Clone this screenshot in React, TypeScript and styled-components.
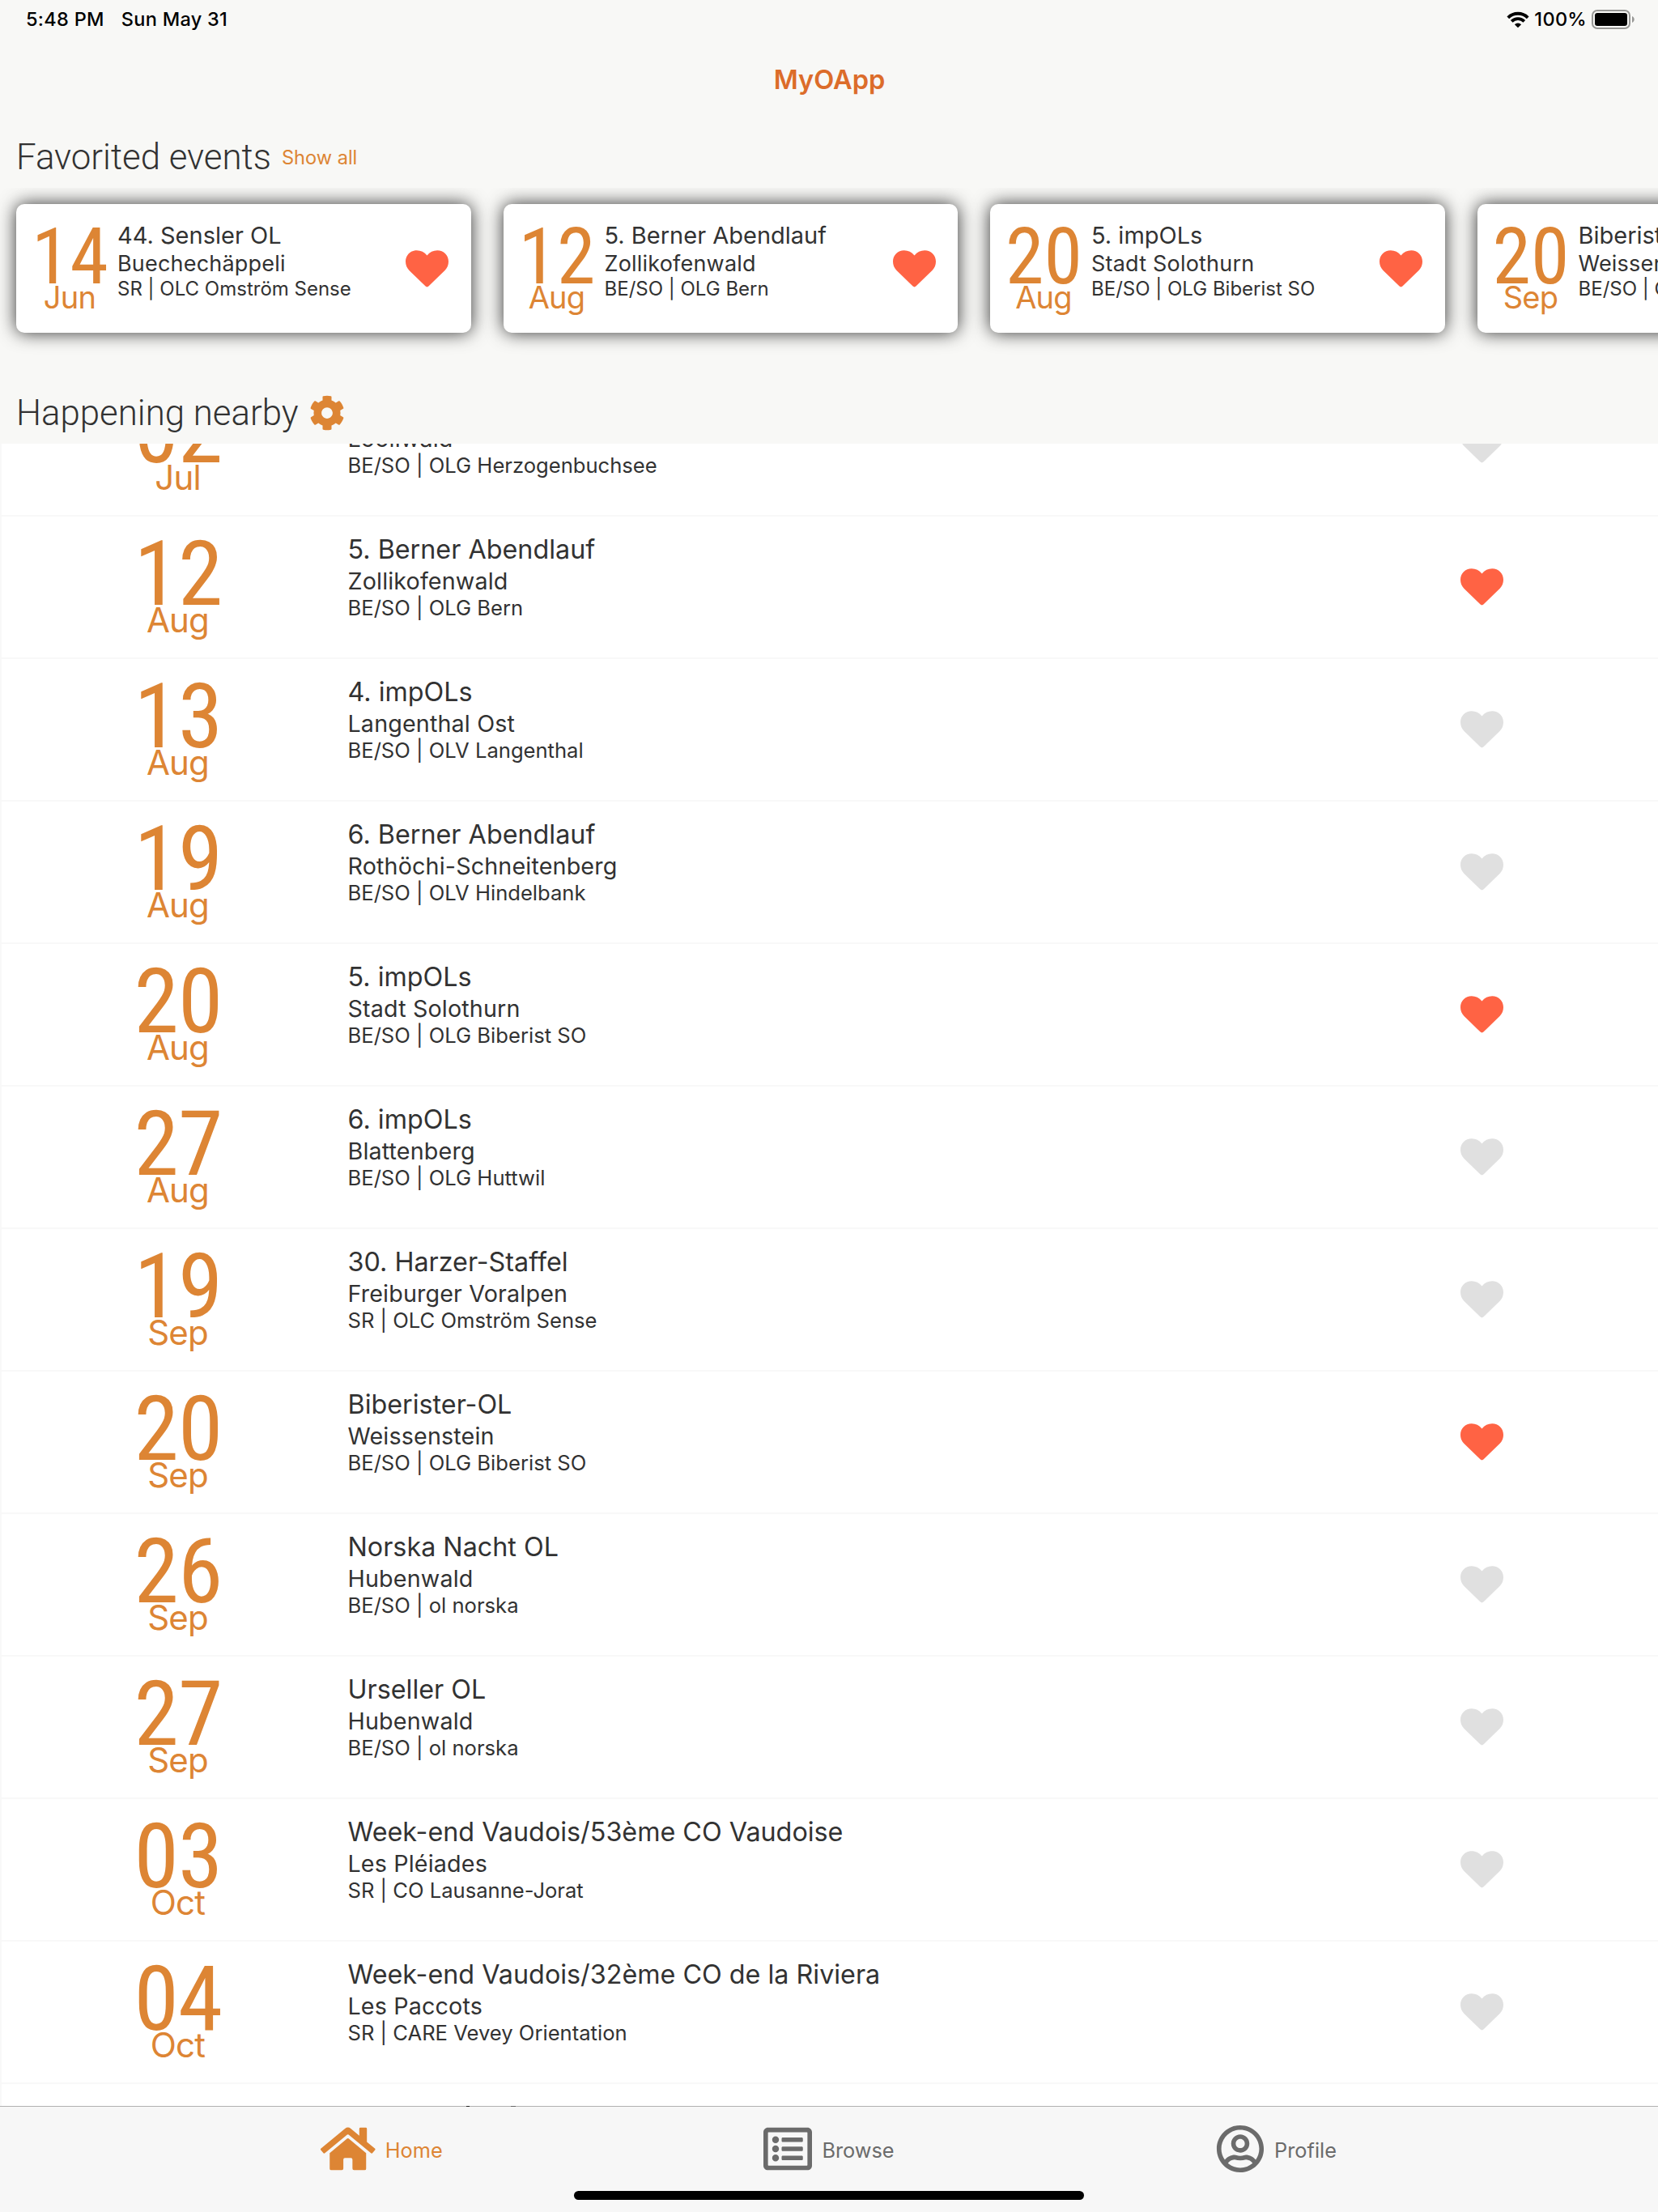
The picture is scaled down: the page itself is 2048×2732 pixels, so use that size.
import React from 'react';
import styled, { createGlobalStyle, css } from 'styled-components';
import { FaCog, FaHome, FaRegListAlt, FaRegUserCircle } from 'react-icons/fa';

const colors = {
  background: '#f8f8f6',
  accent: '#dd8534',
  title: '#dc6c2a',
  text: '#323232',
  heart: '#ff6344',
  heartOff: '#e0e0e0',
  tab: '#6b6b6b',
};

const GlobalStyle = createGlobalStyle`
  *, *::before, *::after { box-sizing: border-box; }
  html, body { margin: 0; padding: 0; }
  body { background: ${colors.background}; overflow: hidden; }
`;

const Screen = styled.div`
  display: flex;
  flex-direction: column;
  width: 2048px;
  height: 2732px;
  overflow: hidden;
  background: ${colors.background};
  color: ${colors.text};
  font-family: Inter, 'Liberation Sans', sans-serif;
  white-space: nowrap;
`;

const StatusBar = styled.div`
  flex: none;
  display: flex;
  align-items: center;
  justify-content: space-between;
  height: 48px;
  padding: 0 28px 0 32px;
  color: #000;
  font-size: 23.5px;
  font-weight: 500;
  letter-spacing: 0.3px;
`;

const StatusGroup = styled.div<{ $gap: number }>`
  display: flex;
  align-items: center;
  gap: ${(p) => p.$gap}px;
`;

const StatusText = styled.span`
  padding-bottom: 1.5px;
`;

const NavBar = styled.header`
  flex: none;
  display: flex;
  align-items: center;
  justify-content: center;
  height: 120px;
  padding: 0 0 20px 1px;
  color: ${colors.title};
  font-size: 32.6px;
  font-weight: 600;
`;

const SectionHeader = styled.div`
  flex: none;
  display: flex;
  align-items: center;
  gap: 13px;
  height: 52px;
  margin-bottom: 12px;
  padding-left: 20px;
`;

const SectionTitle = styled.h2`
  margin: 0;
  font-family: Roboto, 'Liberation Sans', sans-serif;
  font-size: 43.8px;
  font-weight: 300;
  line-height: 52px;
`;

const ShowAll = styled.a`
  color: ${colors.accent};
  font-size: 23.6px;
`;

const SettingsIcon = styled(FaCog)`
  width: 44px;
  height: 44px;
  color: ${colors.accent};
`;

const CardStrip = styled.div`
  flex: none;
  display: flex;
  gap: 40px;
  height: 252px;
  padding: 20px 20px 0;
  overflow: hidden;
`;

const Card = styled.article`
  flex: none;
  display: flex;
  width: 561.5px;
  height: 159px;
  padding: 0 27.5px 0 18px;
  border-radius: 10px;
  background: #fff;
  box-shadow: 0 0 22px rgba(0, 0, 0, 0.8);
`;

type Size = { $compact?: boolean };

const DateColumn = styled.div<Size>`
  flex: none;
  display: flex;
  flex-direction: column;
  align-items: center;
  color: ${colors.accent};
  ${(p) =>
    p.$compact
      ? css`
          width: 96px;
          margin-right: 11px;
          padding-top: 25px;
        `
      : css`
          width: 417px;
          margin-right: 1.5px;
          padding-top: 25.7px;
        `}
`;

const Day = styled.span<Size>`
  padding-left: 1px;
  font-family: 'Roboto Condensed', Roboto, sans-serif;
  font-size: ${(p) => (p.$compact ? 96 : 112)}px;
  line-height: ${(p) => (p.$compact ? 80 : 90)}px;
  letter-spacing: ${(p) => (p.$compact ? 0 : -0.8)}px;
`;

const Month = styled.span<Size>`
  font-size: ${(p) => (p.$compact ? 38 : 42)}px;
  line-height: ${(p) => (p.$compact ? 20 : 24)}px;
  letter-spacing: -0.02em;
`;

const Details = styled.div<Size>`
  flex: 1;
  display: flex;
  flex-direction: column;
  min-width: 0;
  padding-top: ${(p) => (p.$compact ? 20.5 : 19.5)}px;
`;

const EventTitle = styled.span<Size>`
  font-size: ${(p) => (p.$compact ? 29 : 32.3)}px;
  line-height: ${(p) => (p.$compact ? 36 : 42)}px;
`;

const EventPlace = styled.span<Size>`
  font-size: ${(p) => (p.$compact ? 27 : 28.7)}px;
  line-height: ${(p) => (p.$compact ? 33.5 : 36)}px;
  letter-spacing: ${(p) => (p.$compact ? 0.2 : 0.15)}px;
`;

const EventClub = styled.span<Size>`
  font-size: ${(p) => (p.$compact ? 24 : 25.6)}px;
  line-height: ${(p) => (p.$compact ? 30 : 29)}px;
`;

const HeartShape = styled.svg<{ $on: boolean }>`
  flex: none;
  align-self: center;
  width: 53px;
  height: 46px;
  fill: ${(p) => (p.$on ? colors.heart : colors.heartOff)};
`;

const Heart = ({ on }: { on: boolean }) => (
  <HeartShape viewBox="0 0 53 46" $on={on}>
    <path d="M26.5 6.4C23.2 2.4 18.8 0.2 13.8 0.2C6 0.2 0 6.2 0 14C0 18.2 1.5 22 4.5 25L24.6 44.6Q26.5 46.2 28.4 44.6L48.5 25C51.5 22 53 18.2 53 14C53 6.2 47 0.2 39.2 0.2C34.2 0.2 29.8 2.4 26.5 6.4Z" />
  </HeartShape>
);

const List = styled.main`
  flex: none;
  height: 2053px;
  overflow: hidden;
  border-left: 2px solid #f8f8f8;
  background: #fff;
`;

const ScrolledRows = styled.div`
  display: flex;
  flex-direction: column;
  margin-top: -86px;
`;

const Row = styled.article`
  flex: none;
  display: flex;
  height: 176px;
  padding: 0 191px 0 9px;
  border-bottom: 2px solid #f8f8f8;
`;

const TabBar = styled.nav`
  position: relative;
  flex: none;
  display: flex;
  flex-direction: column;
  align-items: center;
  height: 131px;
  border-top: 1px solid #b0b0b0;
  background: #f7f7f7;
`;

const Tabs = styled.div`
  display: flex;
  height: 104px;
`;

const Tab = styled.a<{ $active?: boolean }>`
  display: flex;
  align-items: center;
  justify-content: center;
  gap: 12px;
  width: 552.5px;
  color: ${(p) => (p.$active ? colors.accent : colors.tab)};
  font-size: 25.3px;

  svg {
    width: ${(p) => (p.$active ? 67.5 : 60)}px;
    height: 60px;
  }
`;

const TabLabel = styled.span`
  padding-top: 2px;
`;

const HomeIndicator = styled.div`
  width: 630px;
  height: 11px;
  border-radius: 6px;
  background: #000;
`;

const PeekingStroke = styled.i<{ $x: number; $w: number; $tone: string }>`
  position: absolute;
  top: -1px;
  left: ${(p) => p.$x}px;
  width: ${(p) => p.$w}px;
  height: 1px;
  background: ${(p) => p.$tone};
`;

const WifiIcon = () => (
  <svg width="28" height="21" viewBox="0 0 28 21" fill="none" stroke="#000" strokeWidth="3.9">
    <path d="M1.8 7.8 A17.4 17.4 0 0 1 26.2 7.8" />
    <path d="M6.2 12.4 A11 11 0 0 1 21.8 12.4" />
    <path d="M14 20.3 L9.9 16.2 A5.8 5.8 0 0 1 18.1 16.2 Z" fill="#000" stroke="none" />
  </svg>
);

const BatteryIcon = () => (
  <svg width="54" height="24" viewBox="0 0 54 24">
    <rect x="1" y="1" width="46" height="22" rx="6" fill="none" stroke="#979795" strokeWidth="2" />
    <rect x="4" y="4" width="40" height="16" rx="3.2" fill="#000" />
    <path d="M50 8 C53.6 9.4 53.6 14.6 50 16 Z" fill="#979795" />
  </svg>
);

type Event = {
  day: string;
  month: string;
  title: string;
  place: string;
  club: string;
  favorite?: boolean;
};

const favorites: Event[] = [
  { day: '14', month: 'Jun', title: '44. Sensler OL', place: 'Buechechäppeli', club: 'SR | OLC Omström Sense', favorite: true },
  { day: '12', month: 'Aug', title: '5. Berner Abendlauf', place: 'Zollikofenwald', club: 'BE/SO | OLG Bern', favorite: true },
  { day: '20', month: 'Aug', title: '5. impOLs', place: 'Stadt Solothurn', club: 'BE/SO | OLG Biberist SO', favorite: true },
  { day: '20', month: 'Sep', title: 'Biberister-OL', place: 'Weissenstein', club: 'BE/SO | OLG Biberist SO', favorite: true },
];

const nearby: Event[] = [
  { day: '02', month: 'Jul', title: '3. impOLs', place: 'Lööliwald', club: 'BE/SO | OLG Herzogenbuchsee' },
  { day: '12', month: 'Aug', title: '5. Berner Abendlauf', place: 'Zollikofenwald', club: 'BE/SO | OLG Bern', favorite: true },
  { day: '13', month: 'Aug', title: '4. impOLs', place: 'Langenthal Ost', club: 'BE/SO | OLV Langenthal' },
  { day: '19', month: 'Aug', title: '6. Berner Abendlauf', place: 'Rothöchi-Schneitenberg', club: 'BE/SO | OLV Hindelbank' },
  { day: '20', month: 'Aug', title: '5. impOLs', place: 'Stadt Solothurn', club: 'BE/SO | OLG Biberist SO', favorite: true },
  { day: '27', month: 'Aug', title: '6. impOLs', place: 'Blattenberg', club: 'BE/SO | OLG Huttwil' },
  { day: '19', month: 'Sep', title: '30. Harzer-Staffel', place: 'Freiburger Voralpen', club: 'SR | OLC Omström Sense' },
  { day: '20', month: 'Sep', title: 'Biberister-OL', place: 'Weissenstein', club: 'BE/SO | OLG Biberist SO', favorite: true },
  { day: '26', month: 'Sep', title: 'Norska Nacht OL', place: 'Hubenwald', club: 'BE/SO | ol norska' },
  { day: '27', month: 'Sep', title: 'Urseller OL', place: 'Hubenwald', club: 'BE/SO | ol norska' },
  { day: '03', month: 'Oct', title: 'Week-end Vaudois/53ème CO Vaudoise', place: 'Les Pléiades', club: 'SR | CO Lausanne-Jorat' },
  { day: '04', month: 'Oct', title: 'Week-end Vaudois/32ème CO de la Riviera', place: 'Les Paccots', club: 'SR | CARE Vevey Orientation' },
];

const EventContent = ({ event, compact }: { event: Event; compact?: boolean }) => (
  <>
    <DateColumn $compact={compact}>
      <Day $compact={compact}>{event.day}</Day>
      <Month $compact={compact}>{event.month}</Month>
    </DateColumn>
    <Details $compact={compact}>
      <EventTitle $compact={compact}>{event.title}</EventTitle>
      <EventPlace $compact={compact}>{event.place}</EventPlace>
      <EventClub $compact={compact}>{event.club}</EventClub>
    </Details>
    <Heart on={!!event.favorite} />
  </>
);

export default function App() {
  return (
    <Screen>
      <GlobalStyle />
      <StatusBar>
        <StatusGroup $gap={21}>
          <StatusText>5:48 PM</StatusText>
          <StatusText>Sun May 31</StatusText>
        </StatusGroup>
        <StatusGroup $gap={6}>
          <WifiIcon />
          <StatusText>100%</StatusText>
          <BatteryIcon />
        </StatusGroup>
      </StatusBar>
      <NavBar>MyOApp</NavBar>
      <SectionHeader>
        <SectionTitle>Favorited events</SectionTitle>
        <ShowAll>Show all</ShowAll>
      </SectionHeader>
      <CardStrip>
        {favorites.map((event) => (
          <Card key={event.day + event.month}>
            <EventContent event={event} compact />
          </Card>
        ))}
      </CardStrip>
      <SectionHeader>
        <SectionTitle>Happening nearby</SectionTitle>
        <SettingsIcon />
      </SectionHeader>
      <List>
        <ScrolledRows>
          {nearby.map((event) => (
            <Row key={event.day + event.month}>
              <EventContent event={event} />
            </Row>
          ))}
        </ScrolledRows>
      </List>
      <TabBar>
        <PeekingStroke $x={576} $w={4} $tone="#222" />
        <PeekingStroke $x={631} $w={6} $tone="#666" />
        <Tabs>
          <Tab $active>
            <FaHome />
            <TabLabel>Home</TabLabel>
          </Tab>
          <Tab>
            <FaRegListAlt />
            <TabLabel>Browse</TabLabel>
          </Tab>
          <Tab>
            <FaRegUserCircle />
            <TabLabel>Profile</TabLabel>
          </Tab>
        </Tabs>
        <HomeIndicator />
      </TabBar>
    </Screen>
  );
}
